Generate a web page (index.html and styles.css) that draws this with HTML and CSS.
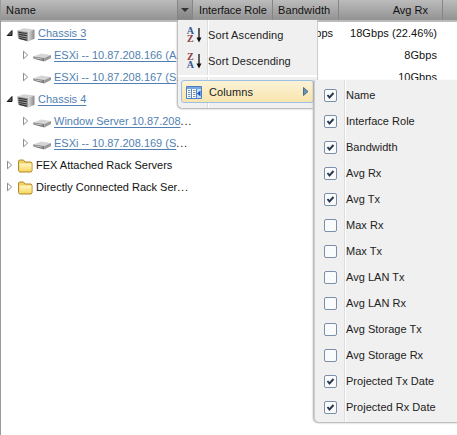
FILE: index.html
```html
<!DOCTYPE html>
<html lang="en">
<head>
<meta charset="utf-8">
<title>Servers</title>
<link rel="stylesheet" href="styles.css">
</head>
<body>
<svg class="defs" width="0" height="0" aria-hidden="true">
  <defs>
    <linearGradient id="gold" x1="0" y1="0" x2="0" y2="1"><stop offset="0" stop-color="#fff6c4"/><stop offset="1" stop-color="#f8d866"/></linearGradient>
    <linearGradient id="steel"><stop offset="0" stop-color="#dddddd"/><stop offset="1" stop-color="#888888"/></linearGradient>
    <symbol id="open" viewBox="0 0 8 8"><path d="M6 1.5v5H1.2z" fill="#555" stroke="#111"/></symbol>
    <symbol id="closed" viewBox="0 0 8 10"><path d="M1.5 1.2v7.6L5.7 5z" fill="#fff" stroke="#8d8d8d"/></symbol>
    <symbol id="chassis" viewBox="0 0 18 14"><path d="M0 2.5 7 .3 17.5 1.5 11 4z" fill="#d2d2d2"/><path d="M.3 2.5 11 4v9.5L1 10.5z" fill="#9a9a9a"/><path d="M11 4l6.5-2.5v9.3L11 13.5z" fill="url(#steel)"/><path d="M1.5 4.3l8.3 1.2M1.7 6.4l8.1 1.3M1.9 8.5l7.9 1.5M2.2 10.4l7.6 1.8" stroke="#333" stroke-width="1.2"/></symbol>
    <symbol id="server" viewBox="0 0 18 10"><path d="M0 4.5 8 1.5 18 3 11.3 6z" fill="#d6d6d6"/><path d="M0 4.5l11.3 1.5v3.5L.8 6.8z" fill="#777"/><path d="M11.3 6 18 3v3l-6.7 3.5z" fill="#999"/><path d="M1.5 5.8l8 1.3" stroke="#ddd" stroke-width=".8"/></symbol>
    <symbol id="folder" viewBox="0 0 15 14"><path d="M.5 11.5v-9.5l1-1h4l1.5 2h6l1 1v8l-1 1h-11.5z" fill="#f2cf62" stroke="#b08a2c"/><path d="M1.5 4.5h12v7.5h-12z" fill="url(#gold)"/></symbol>
    <symbol id="check" viewBox="0 0 13 13"><path d="M3.5 6 5.5 8.5 9.5 4" fill="none" stroke="#2b3954" stroke-width="2"/></symbol>
    <symbol id="down" viewBox="0 0 6 15"><path d="M3 0v12" stroke="#111" stroke-width="1.3"/><path d="M.5 9.5h5L3 14.5z" fill="#111"/></symbol>
  </defs>
</svg>
<div class="grid">
  <header class="head">
    <div class="cell name">Name</div>
    <div class="cell trigger"><svg width="8" height="4"><path d="M0 0h8L4 4z" fill="#333"/></svg></div>
    <div class="cell role">Interface Role</div>
    <div class="cell band">Bandwidth</div>
    <div class="cell rx">Avg Rx</div>
    <div class="cell rest"></div>
  </header>
  <div class="row"><svg class="toggle open"><use href="#open"/></svg><svg class="chassis"><use href="#chassis"/></svg><a class="link">Chassis 3</a><span class="bw">18Gbps</span><span class="val">18Gbps (22.46%)</span></div>
  <div class="row child"><svg class="toggle"><use href="#closed"/></svg><svg class="server"><use href="#server"/></svg><a class="link">ESXi -- 10.87.208.166 (A</a><span class="dots">...</span><span class="val">8Gbps</span></div>
  <div class="row child"><svg class="toggle"><use href="#closed"/></svg><svg class="server"><use href="#server"/></svg><a class="link">ESXi -- 10.87.208.167 (S</a><span class="dots">...</span><span class="val">10Gbps</span></div>
  <div class="row"><svg class="toggle open"><use href="#open"/></svg><svg class="chassis"><use href="#chassis"/></svg><a class="link">Chassis 4</a></div>
  <div class="row child"><svg class="toggle"><use href="#closed"/></svg><svg class="server"><use href="#server"/></svg><a class="link">Window Server 10.87.208</a><span class="dots">...</span></div>
  <div class="row child"><svg class="toggle"><use href="#closed"/></svg><svg class="server"><use href="#server"/></svg><a class="link">ESXi -- 10.87.208.169 (S</a><span class="dots">...</span></div>
  <div class="row"><svg class="toggle"><use href="#closed"/></svg><svg class="folder"><use href="#folder"/></svg><span>FEX Attached Rack Servers</span></div>
  <div class="row"><svg class="toggle"><use href="#closed"/></svg><svg class="folder"><use href="#folder"/></svg><span>Directly Connected Rack Ser<span class="dots">...</span></span></div>
</div>
<div class="menu sort">
  <div class="item"><span class="sorticon"><span class="az"><b class="blue">A</b><b class="red">Z</b></span><svg class="down"><use href="#down"/></svg></span><span>Sort Ascending</span></div>
  <div class="item"><span class="sorticon"><span class="az"><b class="red">Z</b><b class="blue">A</b></span><svg class="down"><use href="#down"/></svg></span><span>Sort Descending</span></div>
  <div class="separator"></div>
  <div class="item active">
    <svg class="columns" viewBox="0 0 16 13"><path d="M.5.5h15v12H.5z" fill="#fff" stroke="#4b7dc4"/><path d="M1 1h14v2H1z" fill="#78a6e5"/><path d="M5.5 3v9.5M10.5 3v9.5" stroke="#5888cb"/><path d="M2 4.5h2.5M2 6.5h2.5M2 8.5h2.5M2 10.5h2.5M7 4.5h2.5M7 6.5h2.5M7 8.5h2.5M7 10.5h2.5" stroke="#7c93b5"/><path d="M11 3h4v9h-4z" fill="#c5ddff"/><path d="M14.5 4.5v6l-3.5-3z" fill="#1752ba"/></svg>
    <span>Columns</span>
    <svg class="more" width="6" height="9"><path d="M.5.5v8L5 4.5z" fill="#6b91b5" stroke="#4b6e96"/></svg>
  </div>
</div>
<div class="menu picker">
  <div class="option"><span class="box"><svg><use href="#check"/></svg></span><span>Name</span></div>
  <div class="option"><span class="box"><svg><use href="#check"/></svg></span><span>Interface Role</span></div>
  <div class="option"><span class="box"><svg><use href="#check"/></svg></span><span>Bandwidth</span></div>
  <div class="option"><span class="box"><svg><use href="#check"/></svg></span><span>Avg Rx</span></div>
  <div class="option"><span class="box"><svg><use href="#check"/></svg></span><span>Avg Tx</span></div>
  <div class="option"><span class="box"></span><span>Max Rx</span></div>
  <div class="option"><span class="box"></span><span>Max Tx</span></div>
  <div class="option"><span class="box"></span><span>Avg LAN Tx</span></div>
  <div class="option"><span class="box"></span><span>Avg LAN Rx</span></div>
  <div class="option"><span class="box"></span><span>Avg Storage Tx</span></div>
  <div class="option"><span class="box"></span><span>Avg Storage Rx</span></div>
  <div class="option"><span class="box"><svg><use href="#check"/></svg></span><span>Projected Tx Date</span></div>
  <div class="option"><span class="box"><svg><use href="#check"/></svg></span><span>Projected Rx Date</span></div>
</div>
</body>
</html>
```
FILE: styles.css
```css
* { box-sizing: border-box; }
body {
  margin: 0;
  height: 435px;
  overflow: hidden;
  background: #fff;
  color: #111;
  font: 11px/14px "Liberation Sans", Arial, sans-serif;
}
.defs { position: absolute; }
svg { flex: none; display: block; }
.grid { height: 435px; border-left: 1px solid #999; }
.head {
  display: flex;
  height: 22px;
  background: linear-gradient(#bcbcbc, #929292 20px, #bbb 20px, #bbb);
}
.cell { display: flex; align-items: center; height: 20px; border-right: 1px solid #858585; white-space: nowrap; }
.name { width: 177px; padding-left: 5px; letter-spacing: .2px; }
.trigger { width: 15px; justify-content: center; background: linear-gradient(#aaa, #838383); }
.role { width: 80px; padding-left: 6px; letter-spacing: -.05px; }
.band { width: 66px; padding-left: 5px; letter-spacing: .1px; }
.rx { width: 104px; justify-content: flex-end; padding-right: 14px; }
.rest { flex: 1; border: 0; }
.row { position: relative; display: flex; align-items: center; height: 22px; padding-left: 5px; white-space: nowrap; }
.child { padding-left: 21px; }
.toggle { width: 8px; height: 10px; margin-right: 3px; }
.toggle.open { height: 8px; }
.chassis { width: 18px; height: 14px; margin: 3px 3px 0 0; }
.server { width: 18px; height: 10px; margin: 3px 3px 0 0; }
.folder { width: 15px; height: 14px; margin: 2px 3px 0 1px; }
.link { color: #527fb2; text-decoration: underline; text-underline-offset: 2px; }
.dots { letter-spacing: .8px; }
.val { position: absolute; right: 20px; letter-spacing: .05px; }
.bw { position: absolute; right: 124px; }
.menu { position: absolute; background: #f0f0f0; color: #222; }
.sort {
  left: 178px;
  top: 20px;
  width: 139px;
  height: 88px;
  padding: 2px 3px;
  border-radius: 0 0 5px 5px;
  box-shadow: -1px 1px 2px #aaa, 1px 0 1px #ccc;
  background: linear-gradient(90deg, #f0f0f0 29px, #ddd 29px, #ddd 30px, #fff 30px, #fff 31px, #f0f0f0 31px);
}
.item { display: flex; align-items: center; height: 26px; padding-left: 5px; letter-spacing: .1px; }
.sorticon { display: flex; width: 22px; align-items: center; gap: 1px; }
.az { display: grid; width: 9px; font: 10px/8px "Liberation Serif", serif; text-align: center; }
.blue { color: #315894; }
.red { color: #8d3f46; }
.down { width: 6px; height: 15px; }
.separator { height: 2px; margin: 1px -3px 3px; background: #fff; }
.item.active {
  height: 23px;
  padding-left: 4px;
  border: 1px solid #9cc0e3;
  border-radius: 3px;
  background: linear-gradient(#fcf3d7, #f7e5ad);
}
.columns { width: 16px; height: 13px; margin: 2px 7px 0 0; }
.more { margin-left: auto; margin-right: 4px; }
.picker {
  left: 314px;
  top: 80px;
  width: 150px;
  height: 342px;
  padding-top: 2px;
  border-left: 1px solid #ccc;
  border-radius: 0 0 0 5px;
  box-shadow: -1px 1px 2px #aaa;
  background: linear-gradient(90deg, #f0f0f0 29px, #ddd 29px, #ddd 30px, #fff 30px, #fff 31px, #f0f0f0 31px);
}
.option { display: flex; align-items: center; height: 26px; padding-left: 9px; letter-spacing: .02px; }
.box { width: 13px; height: 13px; margin-right: 9px; border: 1px solid #7c8fa8; border-radius: 2px; background: #fafbfc; }
.box svg { width: 13px; height: 13px; margin: -1px; }
```
